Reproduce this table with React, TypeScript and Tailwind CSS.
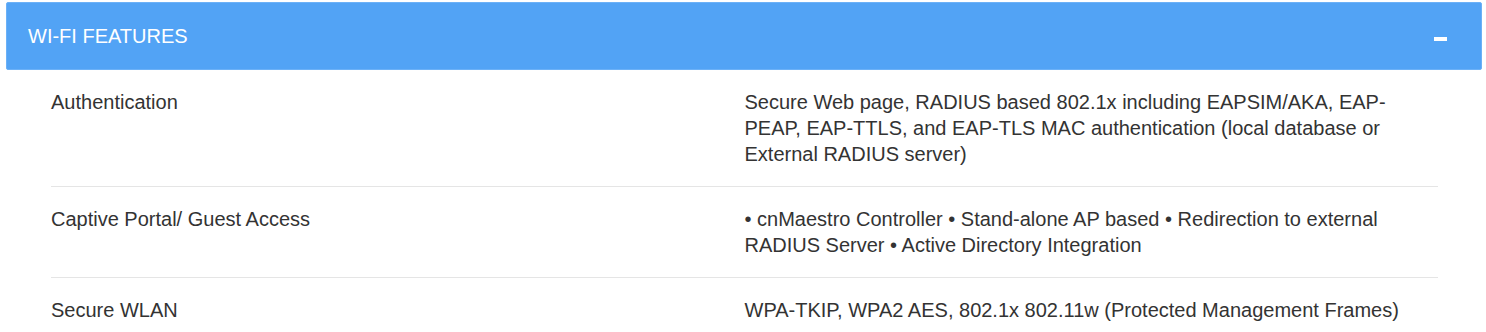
import React from 'react';

const specs = [
  {
    label: 'Authentication',
    value:
      'Secure Web page, RADIUS based 802.1x including EAPSIM/AKA, EAP-PEAP, EAP-TTLS, and EAP-TLS MAC authentication (local database or External RADIUS server)',
  },
  {
    label: 'Captive Portal/ Guest Access',
    value:
      '• cnMaestro Controller • Stand-alone AP based • Redirection to external RADIUS Server • Active Directory Integration',
  },
  {
    label: 'Secure WLAN',
    value: 'WPA-TKIP, WPA2 AES, 802.1x 802.11w (Protected Management Frames)',
  },
];

const App: React.FC = () => {
  return (
    <div className="w-[1486px] h-[332px] overflow-hidden bg-white pt-[2px] font-['Liberation_Sans',Arial,sans-serif]">
      <div className="ml-[6px] w-[1476px]">
        {/* Panel header */}
        <div className="flex items-center justify-between h-[68px] bg-[#52a3f5] border border-[#6cb1f7] rounded-[2px] pl-[21px] pr-[34px]">
          <h2 className="text-[20px] leading-[26px] text-white uppercase">Wi-Fi Features</h2>
          <span className="block w-[13px] h-[4px] bg-white mt-[6px]" />
        </div>

        {/* Spec rows */}
        <div className="pl-[45px] pr-[44px]">
          {specs.map((row, index) => (
            <div
              key={row.label}
              className={`grid grid-cols-2 py-[19px] text-[20px] leading-[26px] text-[#333] ${
                index < specs.length - 1 ? 'border-b border-[#e5e5e5]' : ''
              }`}
            >
              <div>{row.label}</div>
              <div className="pr-[30px]">{row.value}</div>
            </div>
          ))}
        </div>
      </div>
    </div>
  );
};

export default App;
